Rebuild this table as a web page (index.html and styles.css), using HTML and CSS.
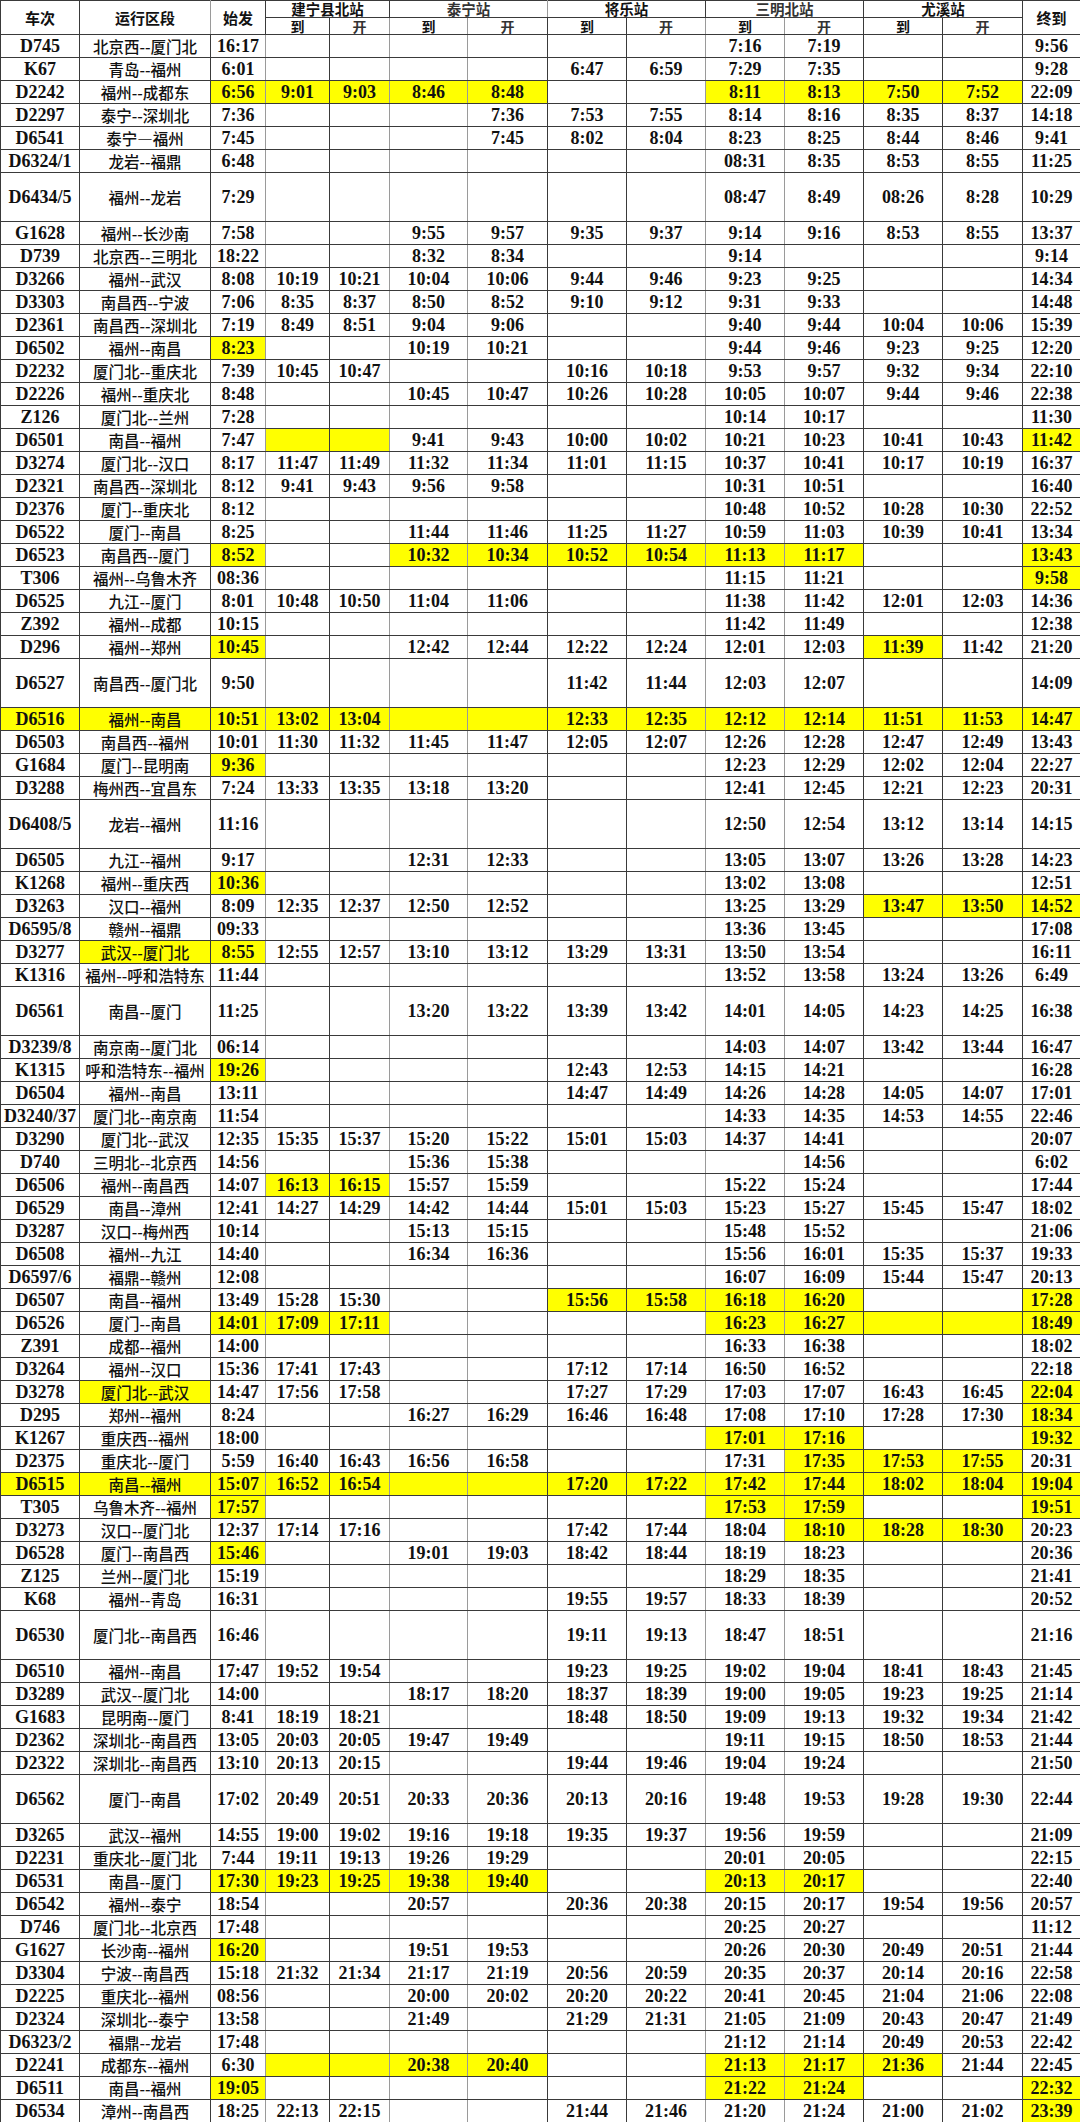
FILE: index.html
```html
<!DOCTYPE html>
<html lang="zh-CN">
<head>
<meta charset="utf-8">
<title>列车时刻表</title>
<link rel="stylesheet" href="styles.css">
</head>
<body>
<table class="tt">
<colgroup>
<col class="c-no"><col class="c-route"><col class="c-start">
<col class="c-a"><col class="c-b"><col class="c-c"><col class="c-d"><col class="c-e"><col class="c-f"><col class="c-g"><col class="c-h"><col class="c-i"><col class="c-j">
<col class="c-end">
</colgroup>
<thead>
<tr class="h1">
<th rowspan="2" class="hb">车次</th><th rowspan="2" class="hb lg">运行区段</th><th rowspan="2" class="hb">始发</th>
<th colspan="2" class="st">建宁县北站</th><th colspan="2" class="st thin lg">泰宁站</th><th colspan="2" class="st">将乐站</th><th colspan="2" class="st thin lgl">三明北站</th><th colspan="2" class="st">尤溪站</th>
<th rowspan="2" class="hb">终到</th>
</tr>
<tr class="h2">
<th class="ar">到</th><th class="ar thin lg">开</th><th class="ar lg">到</th><th class="ar thin">开</th><th class="ar">到</th><th class="ar thin lg">开</th><th class="ar lg">到</th><th class="ar thin">开</th><th class="ar">到</th><th class="ar thin">开</th>
</tr>
</thead>
<tbody>
<tr><td>D745</td><td class="r">北京西--厦门北</td><td class="lg">16:17</td><td></td><td class="lg"></td><td class="lg"></td><td></td><td></td><td class="lg"></td><td class="lg">7:16</td><td>7:19</td><td></td><td></td><td>9:56</td></tr>
<tr><td>K67</td><td class="r">青岛--福州</td><td class="lg">6:01</td><td></td><td class="lg"></td><td class="lg"></td><td></td><td>6:47</td><td class="lg">6:59</td><td class="lg">7:29</td><td>7:35</td><td></td><td></td><td>9:28</td></tr>
<tr><td>D2242</td><td class="r">福州--成都东</td><td class="y lg">6:56</td><td class="y">9:01</td><td class="y lg">9:03</td><td class="y lg">8:46</td><td class="y">8:48</td><td></td><td class="lg"></td><td class="y lg">8:11</td><td class="y">8:13</td><td class="y">7:50</td><td class="y">7:52</td><td>22:09</td></tr>
<tr><td>D2297</td><td class="r">泰宁--深圳北</td><td class="lg">7:36</td><td></td><td class="lg"></td><td class="lg"></td><td>7:36</td><td>7:53</td><td class="lg">7:55</td><td class="lg">8:14</td><td>8:16</td><td>8:35</td><td>8:37</td><td>14:18</td></tr>
<tr><td>D6541</td><td class="r">泰宁—福州</td><td class="lg">7:45</td><td></td><td class="lg"></td><td class="lg"></td><td>7:45</td><td>8:02</td><td class="lg">8:04</td><td class="lg">8:23</td><td>8:25</td><td>8:44</td><td>8:46</td><td>9:41</td></tr>
<tr><td>D6324/1</td><td class="r">龙岩--福鼎</td><td class="lg">6:48</td><td></td><td class="lg"></td><td class="lg"></td><td></td><td></td><td class="lg"></td><td class="lg">08:31</td><td>8:35</td><td>8:53</td><td>8:55</td><td>11:25</td></tr>
<tr class="tall"><td>D6434/5</td><td class="r">福州--龙岩</td><td class="lg">7:29</td><td></td><td class="lg"></td><td class="lg"></td><td></td><td></td><td class="lg"></td><td class="lg">08:47</td><td>8:49</td><td>08:26</td><td>8:28</td><td>10:29</td></tr>
<tr><td>G1628</td><td class="r">福州--长沙南</td><td class="lg">7:58</td><td></td><td class="lg"></td><td class="lg">9:55</td><td>9:57</td><td>9:35</td><td class="lg">9:37</td><td class="lg">9:14</td><td>9:16</td><td>8:53</td><td>8:55</td><td>13:37</td></tr>
<tr><td>D739</td><td class="r">北京西--三明北</td><td class="lg">18:22</td><td></td><td class="lg"></td><td class="lg">8:32</td><td>8:34</td><td></td><td class="lg"></td><td class="lg">9:14</td><td></td><td></td><td></td><td>9:14</td></tr>
<tr><td>D3266</td><td class="r">福州--武汉</td><td class="lg">8:08</td><td>10:19</td><td class="lg">10:21</td><td class="lg">10:04</td><td>10:06</td><td>9:44</td><td class="lg">9:46</td><td class="lg">9:23</td><td>9:25</td><td></td><td></td><td>14:34</td></tr>
<tr><td>D3303</td><td class="r">南昌西--宁波</td><td class="lg">7:06</td><td>8:35</td><td class="lg">8:37</td><td class="lg">8:50</td><td>8:52</td><td>9:10</td><td class="lg">9:12</td><td class="lg">9:31</td><td>9:33</td><td></td><td></td><td>14:48</td></tr>
<tr><td>D2361</td><td class="r">南昌西--深圳北</td><td class="lg">7:19</td><td>8:49</td><td class="lg">8:51</td><td class="lg">9:04</td><td>9:06</td><td></td><td class="lg"></td><td class="lg">9:40</td><td>9:44</td><td>10:04</td><td>10:06</td><td>15:39</td></tr>
<tr><td>D6502</td><td class="r">福州--南昌</td><td class="y lg">8:23</td><td></td><td class="lg"></td><td class="lg">10:19</td><td>10:21</td><td></td><td class="lg"></td><td class="lg">9:44</td><td>9:46</td><td>9:23</td><td>9:25</td><td>12:20</td></tr>
<tr><td>D2232</td><td class="r">厦门北--重庆北</td><td class="lg">7:39</td><td>10:45</td><td class="lg">10:47</td><td class="lg"></td><td></td><td>10:16</td><td class="lg">10:18</td><td class="lg">9:53</td><td>9:57</td><td>9:32</td><td>9:34</td><td>22:10</td></tr>
<tr><td>D2226</td><td class="r">福州--重庆北</td><td class="lg">8:48</td><td></td><td class="lg"></td><td class="lg">10:45</td><td>10:47</td><td>10:26</td><td class="lg">10:28</td><td class="lg">10:05</td><td>10:07</td><td>9:44</td><td>9:46</td><td>22:38</td></tr>
<tr><td>Z126</td><td class="r">厦门北--兰州</td><td class="lg">7:28</td><td></td><td class="lg"></td><td class="lg"></td><td></td><td></td><td class="lg"></td><td class="lg">10:14</td><td>10:17</td><td></td><td></td><td>11:30</td></tr>
<tr><td>D6501</td><td class="r">南昌--福州</td><td class="lg">7:47</td><td class="y"></td><td class="y lg"></td><td class="lg">9:41</td><td>9:43</td><td>10:00</td><td class="lg">10:02</td><td class="lg">10:21</td><td>10:23</td><td>10:41</td><td>10:43</td><td class="y">11:42</td></tr>
<tr><td>D3274</td><td class="r">厦门北--汉口</td><td class="lg">8:17</td><td>11:47</td><td class="lg">11:49</td><td class="lg">11:32</td><td>11:34</td><td>11:01</td><td class="lg">11:15</td><td class="lg">10:37</td><td>10:41</td><td>10:17</td><td>10:19</td><td>16:37</td></tr>
<tr><td>D2321</td><td class="r">南昌西--深圳北</td><td class="lg">8:12</td><td>9:41</td><td class="lg">9:43</td><td class="lg">9:56</td><td>9:58</td><td></td><td class="lg"></td><td class="lg">10:31</td><td>10:51</td><td></td><td></td><td>16:40</td></tr>
<tr><td>D2376</td><td class="r">厦门--重庆北</td><td class="lg">8:12</td><td></td><td class="lg"></td><td class="lg"></td><td></td><td></td><td class="lg"></td><td class="lg">10:48</td><td>10:52</td><td>10:28</td><td>10:30</td><td>22:52</td></tr>
<tr><td>D6522</td><td class="r">厦门--南昌</td><td class="lg">8:25</td><td></td><td class="lg"></td><td class="lg">11:44</td><td>11:46</td><td>11:25</td><td class="lg">11:27</td><td class="lg">10:59</td><td>11:03</td><td>10:39</td><td>10:41</td><td>13:34</td></tr>
<tr><td>D6523</td><td class="r">南昌西--厦门</td><td class="y lg">8:52</td><td></td><td class="lg"></td><td class="y lg">10:32</td><td class="y">10:34</td><td class="y">10:52</td><td class="y lg">10:54</td><td class="y lg">11:13</td><td class="y">11:17</td><td></td><td></td><td class="y">13:43</td></tr>
<tr><td>T306</td><td class="r">福州--乌鲁木齐</td><td class="lg">08:36</td><td></td><td class="lg"></td><td class="lg"></td><td></td><td></td><td class="lg"></td><td class="lg">11:15</td><td>11:21</td><td></td><td></td><td class="y">9:58</td></tr>
<tr><td>D6525</td><td class="r">九江--厦门</td><td class="lg">8:01</td><td>10:48</td><td class="lg">10:50</td><td class="lg">11:04</td><td>11:06</td><td></td><td class="lg"></td><td class="lg">11:38</td><td>11:42</td><td>12:01</td><td>12:03</td><td>14:36</td></tr>
<tr><td>Z392</td><td class="r">福州--成都</td><td class="lg">10:15</td><td></td><td class="lg"></td><td class="lg"></td><td></td><td></td><td class="lg"></td><td class="lg">11:42</td><td>11:49</td><td></td><td></td><td>12:38</td></tr>
<tr><td>D296</td><td class="r">福州--郑州</td><td class="y lg">10:45</td><td></td><td class="lg"></td><td class="lg">12:42</td><td>12:44</td><td>12:22</td><td class="lg">12:24</td><td class="lg">12:01</td><td>12:03</td><td class="y">11:39</td><td>11:42</td><td>21:20</td></tr>
<tr class="tall"><td>D6527</td><td class="r">南昌西--厦门北</td><td class="lg">9:50</td><td></td><td class="lg"></td><td class="lg"></td><td></td><td>11:42</td><td class="lg">11:44</td><td class="lg">12:03</td><td>12:07</td><td></td><td></td><td>14:09</td></tr>
<tr class="yr"><td>D6516</td><td class="r">福州--南昌</td><td class="lg">10:51</td><td>13:02</td><td class="lg">13:04</td><td class="lg"></td><td></td><td>12:33</td><td class="lg">12:35</td><td class="lg">12:12</td><td>12:14</td><td>11:51</td><td>11:53</td><td>14:47</td></tr>
<tr><td>D6503</td><td class="r">南昌西--福州</td><td class="lg">10:01</td><td>11:30</td><td class="lg">11:32</td><td class="lg">11:45</td><td>11:47</td><td>12:05</td><td class="lg">12:07</td><td class="lg">12:26</td><td>12:28</td><td>12:47</td><td>12:49</td><td>13:43</td></tr>
<tr><td>G1684</td><td class="r">厦门--昆明南</td><td class="y lg">9:36</td><td></td><td class="lg"></td><td class="lg"></td><td></td><td></td><td class="lg"></td><td class="lg">12:23</td><td>12:29</td><td>12:02</td><td>12:04</td><td>22:27</td></tr>
<tr><td>D3288</td><td class="r">梅州西--宜昌东</td><td class="lg">7:24</td><td>13:33</td><td class="lg">13:35</td><td class="lg">13:18</td><td>13:20</td><td></td><td class="lg"></td><td class="lg">12:41</td><td>12:45</td><td>12:21</td><td>12:23</td><td>20:31</td></tr>
<tr class="tall"><td>D6408/5</td><td class="r">龙岩--福州</td><td class="lg">11:16</td><td></td><td class="lg"></td><td class="lg"></td><td></td><td></td><td class="lg"></td><td class="lg">12:50</td><td>12:54</td><td>13:12</td><td>13:14</td><td>14:15</td></tr>
<tr><td>D6505</td><td class="r">九江--福州</td><td class="lg">9:17</td><td></td><td class="lg"></td><td class="lg">12:31</td><td>12:33</td><td></td><td class="lg"></td><td class="lg">13:05</td><td>13:07</td><td>13:26</td><td>13:28</td><td>14:23</td></tr>
<tr><td>K1268</td><td class="r">福州--重庆西</td><td class="y lg">10:36</td><td></td><td class="lg"></td><td class="lg"></td><td></td><td></td><td class="lg"></td><td class="lg">13:02</td><td>13:08</td><td></td><td></td><td>12:51</td></tr>
<tr><td>D3263</td><td class="r">汉口--福州</td><td class="lg">8:09</td><td>12:35</td><td class="lg">12:37</td><td class="lg">12:50</td><td>12:52</td><td></td><td class="lg"></td><td class="lg">13:25</td><td>13:29</td><td class="y">13:47</td><td class="y">13:50</td><td class="y">14:52</td></tr>
<tr><td>D6595/8</td><td class="r">赣州--福鼎</td><td class="lg">09:33</td><td></td><td class="lg"></td><td class="lg"></td><td></td><td></td><td class="lg"></td><td class="lg">13:36</td><td>13:45</td><td></td><td></td><td>17:08</td></tr>
<tr><td>D3277</td><td class="r y">武汉--厦门北</td><td class="y lg">8:55</td><td>12:55</td><td class="lg">12:57</td><td class="lg">13:10</td><td>13:12</td><td>13:29</td><td class="lg">13:31</td><td class="lg">13:50</td><td>13:54</td><td></td><td></td><td>16:11</td></tr>
<tr><td>K1316</td><td class="r">福州--呼和浩特东</td><td class="lg">11:44</td><td></td><td class="lg"></td><td class="lg"></td><td></td><td></td><td class="lg"></td><td class="lg">13:52</td><td>13:58</td><td>13:24</td><td>13:26</td><td>6:49</td></tr>
<tr class="tall"><td>D6561</td><td class="r">南昌--厦门</td><td class="lg">11:25</td><td></td><td class="lg"></td><td class="lg">13:20</td><td>13:22</td><td>13:39</td><td class="lg">13:42</td><td class="lg">14:01</td><td>14:05</td><td>14:23</td><td>14:25</td><td>16:38</td></tr>
<tr><td>D3239/8</td><td class="r">南京南--厦门北</td><td class="lg">06:14</td><td></td><td class="lg"></td><td class="lg"></td><td></td><td></td><td class="lg"></td><td class="lg">14:03</td><td>14:07</td><td>13:42</td><td>13:44</td><td>16:47</td></tr>
<tr><td>K1315</td><td class="r">呼和浩特东--福州</td><td class="y lg">19:26</td><td></td><td class="lg"></td><td class="lg"></td><td></td><td>12:43</td><td class="lg">12:53</td><td class="lg">14:15</td><td>14:21</td><td></td><td></td><td>16:28</td></tr>
<tr><td>D6504</td><td class="r">福州--南昌</td><td class="lg">13:11</td><td></td><td class="lg"></td><td class="lg"></td><td></td><td>14:47</td><td class="lg">14:49</td><td class="lg">14:26</td><td>14:28</td><td>14:05</td><td>14:07</td><td>17:01</td></tr>
<tr><td>D3240/37</td><td class="r">厦门北--南京南</td><td class="lg">11:54</td><td></td><td class="lg"></td><td class="lg"></td><td></td><td></td><td class="lg"></td><td class="lg">14:33</td><td>14:35</td><td>14:53</td><td>14:55</td><td>22:46</td></tr>
<tr><td>D3290</td><td class="r">厦门北--武汉</td><td class="lg">12:35</td><td>15:35</td><td class="lg">15:37</td><td class="lg">15:20</td><td>15:22</td><td>15:01</td><td class="lg">15:03</td><td class="lg">14:37</td><td>14:41</td><td></td><td></td><td>20:07</td></tr>
<tr><td>D740</td><td class="r">三明北--北京西</td><td class="lg">14:56</td><td></td><td class="lg"></td><td class="lg">15:36</td><td>15:38</td><td></td><td class="lg"></td><td class="lg"></td><td>14:56</td><td></td><td></td><td>6:02</td></tr>
<tr><td>D6506</td><td class="r">福州--南昌西</td><td class="lg">14:07</td><td class="y">16:13</td><td class="y lg">16:15</td><td class="lg">15:57</td><td>15:59</td><td></td><td class="lg"></td><td class="lg">15:22</td><td>15:24</td><td></td><td></td><td>17:44</td></tr>
<tr><td>D6529</td><td class="r">南昌--漳州</td><td class="lg">12:41</td><td>14:27</td><td class="lg">14:29</td><td class="lg">14:42</td><td>14:44</td><td>15:01</td><td class="lg">15:03</td><td class="lg">15:23</td><td>15:27</td><td>15:45</td><td>15:47</td><td>18:02</td></tr>
<tr><td>D3287</td><td class="r">汉口--梅州西</td><td class="lg">10:14</td><td></td><td class="lg"></td><td class="lg">15:13</td><td>15:15</td><td></td><td class="lg"></td><td class="lg">15:48</td><td>15:52</td><td></td><td></td><td>21:06</td></tr>
<tr><td>D6508</td><td class="r">福州--九江</td><td class="lg">14:40</td><td></td><td class="lg"></td><td class="lg">16:34</td><td>16:36</td><td></td><td class="lg"></td><td class="lg">15:56</td><td>16:01</td><td>15:35</td><td>15:37</td><td>19:33</td></tr>
<tr><td>D6597/6</td><td class="r">福鼎--赣州</td><td class="lg">12:08</td><td></td><td class="lg"></td><td class="lg"></td><td></td><td></td><td class="lg"></td><td class="lg">16:07</td><td>16:09</td><td>15:44</td><td>15:47</td><td>20:13</td></tr>
<tr><td>D6507</td><td class="r">南昌--福州</td><td class="lg">13:49</td><td>15:28</td><td class="lg">15:30</td><td class="lg"></td><td></td><td class="y">15:56</td><td class="y lg">15:58</td><td class="y lg">16:18</td><td class="y">16:20</td><td></td><td></td><td class="y">17:28</td></tr>
<tr><td>D6526</td><td class="r">厦门--南昌</td><td class="y lg">14:01</td><td class="y">17:09</td><td class="y lg">17:11</td><td class="lg"></td><td></td><td></td><td class="lg"></td><td class="y lg">16:23</td><td class="y">16:27</td><td class="y"></td><td class="y"></td><td class="y">18:49</td></tr>
<tr><td>Z391</td><td class="r">成都--福州</td><td class="lg">14:00</td><td></td><td class="lg"></td><td class="lg"></td><td></td><td></td><td class="lg"></td><td class="lg">16:33</td><td>16:38</td><td></td><td></td><td>18:02</td></tr>
<tr><td>D3264</td><td class="r">福州--汉口</td><td class="lg">15:36</td><td>17:41</td><td class="lg">17:43</td><td class="lg"></td><td></td><td>17:12</td><td class="lg">17:14</td><td class="lg">16:50</td><td>16:52</td><td></td><td></td><td>22:18</td></tr>
<tr><td>D3278</td><td class="r y">厦门北--武汉</td><td class="lg">14:47</td><td>17:56</td><td class="lg">17:58</td><td class="lg"></td><td></td><td>17:27</td><td class="lg">17:29</td><td class="lg">17:03</td><td>17:07</td><td>16:43</td><td>16:45</td><td class="y">22:04</td></tr>
<tr><td>D295</td><td class="r">郑州--福州</td><td class="lg">8:24</td><td></td><td class="lg"></td><td class="lg">16:27</td><td>16:29</td><td>16:46</td><td class="lg">16:48</td><td class="lg">17:08</td><td>17:10</td><td>17:28</td><td>17:30</td><td class="y">18:34</td></tr>
<tr><td>K1267</td><td class="r">重庆西--福州</td><td class="lg">18:00</td><td></td><td class="lg"></td><td class="lg"></td><td></td><td></td><td class="lg"></td><td class="y lg">17:01</td><td class="y">17:16</td><td></td><td></td><td class="y">19:32</td></tr>
<tr><td>D2375</td><td class="r">重庆北--厦门</td><td class="lg">5:59</td><td>16:40</td><td class="lg">16:43</td><td class="lg">16:56</td><td>16:58</td><td></td><td class="lg"></td><td class="lg">17:31</td><td class="y">17:35</td><td class="y">17:53</td><td class="y">17:55</td><td>20:31</td></tr>
<tr class="yr"><td>D6515</td><td class="r">南昌--福州</td><td class="lg">15:07</td><td>16:52</td><td class="lg">16:54</td><td class="lg"></td><td></td><td>17:20</td><td class="lg">17:22</td><td class="lg">17:42</td><td>17:44</td><td>18:02</td><td>18:04</td><td>19:04</td></tr>
<tr><td>T305</td><td class="r">乌鲁木齐--福州</td><td class="y lg">17:57</td><td></td><td class="lg"></td><td class="lg"></td><td></td><td></td><td class="lg"></td><td class="y lg">17:53</td><td class="y">17:59</td><td></td><td></td><td class="y">19:51</td></tr>
<tr><td>D3273</td><td class="r">汉口--厦门北</td><td class="lg">12:37</td><td>17:14</td><td class="lg">17:16</td><td class="lg"></td><td></td><td>17:42</td><td class="lg">17:44</td><td class="lg">18:04</td><td class="y">18:10</td><td class="y">18:28</td><td class="y">18:30</td><td>20:23</td></tr>
<tr><td>D6528</td><td class="r">厦门--南昌西</td><td class="y lg">15:46</td><td></td><td class="lg"></td><td class="lg">19:01</td><td>19:03</td><td>18:42</td><td class="lg">18:44</td><td class="lg">18:19</td><td>18:23</td><td></td><td></td><td>20:36</td></tr>
<tr><td>Z125</td><td class="r">兰州--厦门北</td><td class="lg">15:19</td><td></td><td class="lg"></td><td class="lg"></td><td></td><td></td><td class="lg"></td><td class="lg">18:29</td><td>18:35</td><td></td><td></td><td>21:41</td></tr>
<tr><td>K68</td><td class="r">福州--青岛</td><td class="lg">16:31</td><td></td><td class="lg"></td><td class="lg"></td><td></td><td>19:55</td><td class="lg">19:57</td><td class="lg">18:33</td><td>18:39</td><td></td><td></td><td>20:52</td></tr>
<tr class="tall"><td>D6530</td><td class="r">厦门北--南昌西</td><td class="lg">16:46</td><td></td><td class="lg"></td><td class="lg"></td><td></td><td>19:11</td><td class="lg">19:13</td><td class="lg">18:47</td><td>18:51</td><td></td><td></td><td>21:16</td></tr>
<tr><td>D6510</td><td class="r">福州--南昌</td><td class="lg">17:47</td><td>19:52</td><td class="lg">19:54</td><td class="lg"></td><td></td><td>19:23</td><td class="lg">19:25</td><td class="lg">19:02</td><td>19:04</td><td>18:41</td><td>18:43</td><td>21:45</td></tr>
<tr><td>D3289</td><td class="r">武汉--厦门北</td><td class="lg">14:00</td><td></td><td class="lg"></td><td class="lg">18:17</td><td>18:20</td><td>18:37</td><td class="lg">18:39</td><td class="lg">19:00</td><td>19:05</td><td>19:23</td><td>19:25</td><td>21:14</td></tr>
<tr><td>G1683</td><td class="r">昆明南--厦门</td><td class="lg">8:41</td><td>18:19</td><td class="lg">18:21</td><td class="lg"></td><td></td><td>18:48</td><td class="lg">18:50</td><td class="lg">19:09</td><td>19:13</td><td>19:32</td><td>19:34</td><td>21:42</td></tr>
<tr><td>D2362</td><td class="r">深圳北--南昌西</td><td class="lg">13:05</td><td>20:03</td><td class="lg">20:05</td><td class="lg">19:47</td><td>19:49</td><td></td><td class="lg"></td><td class="lg">19:11</td><td>19:15</td><td>18:50</td><td>18:53</td><td>21:44</td></tr>
<tr><td>D2322</td><td class="r">深圳北--南昌西</td><td class="lg">13:10</td><td>20:13</td><td class="lg">20:15</td><td class="lg"></td><td></td><td>19:44</td><td class="lg">19:46</td><td class="lg">19:04</td><td>19:24</td><td></td><td></td><td>21:50</td></tr>
<tr class="tall"><td>D6562</td><td class="r">厦门--南昌</td><td class="lg">17:02</td><td>20:49</td><td class="lg">20:51</td><td class="lg">20:33</td><td>20:36</td><td>20:13</td><td class="lg">20:16</td><td class="lg">19:48</td><td>19:53</td><td>19:28</td><td>19:30</td><td>22:44</td></tr>
<tr><td>D3265</td><td class="r">武汉--福州</td><td class="lg">14:55</td><td>19:00</td><td class="lg">19:02</td><td class="lg">19:16</td><td>19:18</td><td>19:35</td><td class="lg">19:37</td><td class="lg">19:56</td><td>19:59</td><td></td><td></td><td>21:09</td></tr>
<tr><td>D2231</td><td class="r">重庆北--厦门北</td><td class="lg">7:44</td><td>19:11</td><td class="lg">19:13</td><td class="lg">19:26</td><td>19:29</td><td></td><td class="lg"></td><td class="lg">20:01</td><td>20:05</td><td></td><td></td><td>22:15</td></tr>
<tr><td>D6531</td><td class="r">南昌--厦门</td><td class="y lg">17:30</td><td class="y">19:23</td><td class="y lg">19:25</td><td class="y lg">19:38</td><td class="y">19:40</td><td></td><td class="lg"></td><td class="y lg">20:13</td><td class="y">20:17</td><td></td><td></td><td>22:40</td></tr>
<tr><td>D6542</td><td class="r">福州--泰宁</td><td class="lg">18:54</td><td></td><td class="lg"></td><td class="lg">20:57</td><td></td><td>20:36</td><td class="lg">20:38</td><td class="lg">20:15</td><td>20:17</td><td>19:54</td><td>19:56</td><td>20:57</td></tr>
<tr><td>D746</td><td class="r">厦门北--北京西</td><td class="lg">17:48</td><td></td><td class="lg"></td><td class="lg"></td><td></td><td></td><td class="lg"></td><td class="lg">20:25</td><td>20:27</td><td></td><td></td><td>11:12</td></tr>
<tr><td>G1627</td><td class="r">长沙南--福州</td><td class="y lg">16:20</td><td></td><td class="lg"></td><td class="lg">19:51</td><td>19:53</td><td></td><td class="lg"></td><td class="lg">20:26</td><td>20:30</td><td>20:49</td><td>20:51</td><td>21:44</td></tr>
<tr><td>D3304</td><td class="r">宁波--南昌西</td><td class="lg">15:18</td><td>21:32</td><td class="lg">21:34</td><td class="lg">21:17</td><td>21:19</td><td>20:56</td><td class="lg">20:59</td><td class="lg">20:35</td><td>20:37</td><td>20:14</td><td>20:16</td><td>22:58</td></tr>
<tr><td>D2225</td><td class="r">重庆北--福州</td><td class="lg">08:56</td><td></td><td class="lg"></td><td class="lg">20:00</td><td>20:02</td><td>20:20</td><td class="lg">20:22</td><td class="lg">20:41</td><td>20:45</td><td>21:04</td><td>21:06</td><td>22:08</td></tr>
<tr><td>D2324</td><td class="r">深圳北--泰宁</td><td class="lg">13:58</td><td></td><td class="lg"></td><td class="lg">21:49</td><td></td><td>21:29</td><td class="lg">21:31</td><td class="lg">21:05</td><td>21:09</td><td>20:43</td><td>20:47</td><td>21:49</td></tr>
<tr><td>D6323/2</td><td class="r">福鼎--龙岩</td><td class="lg">17:48</td><td></td><td class="lg"></td><td class="lg"></td><td></td><td></td><td class="lg"></td><td class="lg">21:12</td><td>21:14</td><td>20:49</td><td>20:53</td><td>22:42</td></tr>
<tr><td>D2241</td><td class="r">成都东--福州</td><td class="lg">6:30</td><td class="y"></td><td class="y lg"></td><td class="y lg">20:38</td><td class="y">20:40</td><td></td><td class="lg"></td><td class="y lg">21:13</td><td class="y">21:17</td><td class="y">21:36</td><td>21:44</td><td>22:45</td></tr>
<tr><td>D6511</td><td class="r">南昌--福州</td><td class="y lg">19:05</td><td></td><td class="lg"></td><td class="lg"></td><td></td><td></td><td class="lg"></td><td class="y lg">21:22</td><td class="y">21:24</td><td></td><td></td><td class="y">22:32</td></tr>
<tr><td>D6534</td><td class="r">漳州--南昌西</td><td class="lg">18:25</td><td>22:13</td><td class="lg">22:15</td><td class="lg"></td><td></td><td>21:44</td><td class="lg">21:46</td><td class="lg">21:20</td><td>21:24</td><td>21:00</td><td>21:02</td><td class="y">23:39</td></tr>
</tbody>
</table>
</body>
</html>
```
FILE: styles.css
```css
html, body {
  margin: 0;
  padding: 0;
  background: #ffffff;
}

.tt {
  border-collapse: collapse;
  table-layout: fixed;
  width: 1080px;
  color: #111111;
}

.c-no { width: 79px; }
.c-route { width: 131px; }
.c-start { width: 55px; }
.c-a { width: 64px; }
.c-b { width: 60px; }
.c-c { width: 78px; }
.c-d { width: 80px; }
.c-e { width: 79px; }
.c-f { width: 79px; }
.c-g { width: 79px; }
.c-h { width: 79px; }
.c-i { width: 79px; }
.c-j { width: 80px; }
.c-end { width: 58px; }

.tt th,
.tt td {
  border: 1px solid #3a3a3a;
  padding: 0;
  text-align: center;
  vertical-align: middle;
  white-space: nowrap;
}

.tt td {
  overflow: hidden;
  font-family: "Liberation Serif", "Times New Roman", serif;
  font-weight: bold;
  font-size: 18px;
  line-height: 20px;
}

.tt td.r {
  font-family: "Noto Sans CJK SC", "Noto Sans", sans-serif;
  font-weight: 500;
  font-size: 15.5px;
  line-height: 20px;
}

.tt th {
  overflow: visible;
  font-family: "Noto Sans CJK SC", "Noto Sans", sans-serif;
  line-height: 14px;
  font-weight: bold;
}

.h1 { height: 17px; }
.h2 { height: 17px; }

.hb { font-size: 15px; }
.st { font-size: 14.5px; }
.ar { font-size: 14px; }
.thin { font-weight: 500; color: #333333; }

.tt tbody tr { height: 23px; }
.tt tbody tr.tall { height: 49px; }

.tt td.lg,
.tt th.lg { border-right-color: #9a9a9a; }
.tt th.lgl { border-left-color: #9a9a9a; }

.tt td.y { background: #ffff00; }
.tt tr.yr td { background: #ffff00; }
```
